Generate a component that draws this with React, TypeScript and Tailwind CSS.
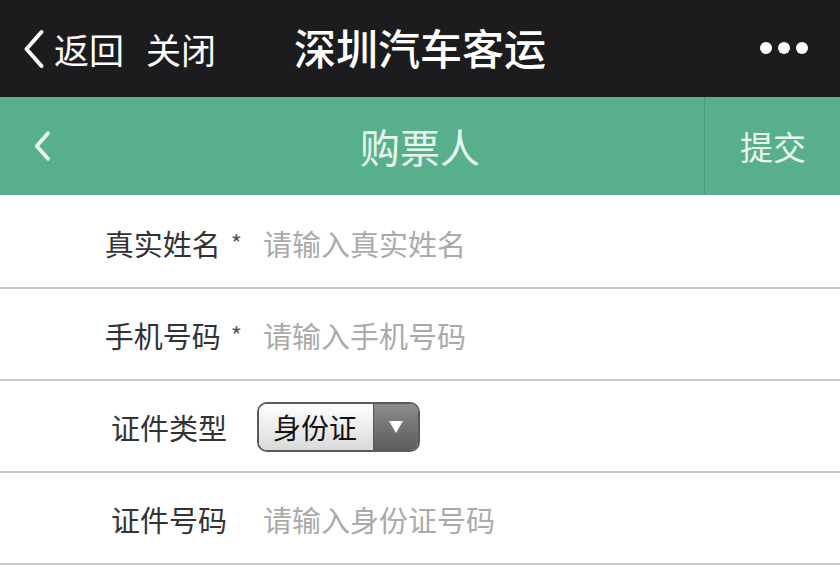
import React from 'react';

const FONT = { fontFamily: '"Noto Sans CJK SC", "Noto Sans", sans-serif' };

const ROWS = [
  { label: '真实姓名', star: true, placeholder: '请输入真实姓名', first: true },
  { label: '手机号码', star: true, placeholder: '请输入手机号码' },
  { label: '证件类型', select: '身份证' },
  { label: '证件号码', placeholder: '请输入身份证号码' },
];

function Chevron({ className, stroke = 4 }: { className?: string; stroke?: number }) {
  return (
    <svg viewBox="0 0 24 40" className={className} fill="none">
      <path d="M20 3 L5 20 L20 37" stroke="currentColor" strokeWidth={stroke} strokeLinecap="round" strokeLinejoin="round" />
    </svg>
  );
}

export default function App() {
  return (
    <div className="w-[840px] h-[588px] overflow-hidden bg-white" style={FONT}>
      {/* WeChat top bar */}
      <div className="h-[97px] bg-[#1c1b1d] grid grid-cols-[1fr_auto_1fr] items-center text-white">
        <div className="flex items-center pl-[21px]">
          <Chevron className="w-[25px] h-[40px]" stroke={4} />
          <span className="ml-[8px] text-[35px] leading-none">返回</span>
          <span className="ml-[22px] text-[35px] leading-none">关闭</span>
        </div>
        <div className="text-[42px] leading-none font-medium mb-[4px]">深圳汽车客运</div>
        <div className="flex justify-end items-center gap-[6px] pr-[32px] mb-[2px]">
          <span className="w-[12px] h-[12px] rounded-full bg-white" />
          <span className="w-[12px] h-[12px] rounded-full bg-white" />
          <span className="w-[12px] h-[12px] rounded-full bg-white" />
        </div>
      </div>

      {/* green header */}
      <div className="h-[98px] bg-[#57b08b] grid grid-cols-[1fr_auto_1fr] items-center text-[#e8f8ef]">
        <div className="flex items-center pl-[32px]">
          <Chevron className="w-[20px] h-[30px]" stroke={5} />
        </div>
        <div className="text-[40px] leading-none">购票人</div>
        <div className="flex justify-end h-full">
          <div className="w-[136px] h-full border-l border-[#4c9f7c] flex items-center pl-[35px]">
            <span className="text-[33px] leading-none">提交</span>
          </div>
        </div>
      </div>

      {/* form rows */}
      {ROWS.map((r) => (
        <div
          key={r.label}
          className={`${r.first ? 'h-[94px] pt-[4px]' : 'h-[92px] pt-[2px]'} flex items-center border-b-2 border-[#c9c9c9]`}
        >
          <div className={`w-[242px] flex justify-end items-center ${r.star ? '' : 'pr-[15px]'}`}>
            <span className="text-[29px] leading-none text-[#333]">{r.label}</span>
            {r.star && <span className="ml-[10px] text-[24px] leading-none text-[#555]">*</span>}
          </div>
          {r.select ? (
            <div className="ml-[15px] w-[163px] h-[50px] rounded-[10px] border-2 border-[#5a5a5a] overflow-hidden flex">
              <div className="flex-1 flex items-center justify-center bg-gradient-to-b from-[#ffffff] to-[#d9d9d9] text-[28px] leading-none text-[#111] pr-[2px]">
                {r.select}
              </div>
              <div className="w-[45px] flex items-center justify-center bg-gradient-to-b from-[#8c8c8c] to-[#5c5c5c] border-l border-[#555]">
                <svg viewBox="0 0 14 12" className="w-[14px] h-[12px]">
                  <path d="M0 0 H14 L7 12 Z" fill="#fff" />
                </svg>
              </div>
            </div>
          ) : (
            <span className="ml-[21px] text-[29px] leading-none text-[#aaaaaa]">{r.placeholder}</span>
          )}
        </div>
      ))}
    </div>
  );
}
